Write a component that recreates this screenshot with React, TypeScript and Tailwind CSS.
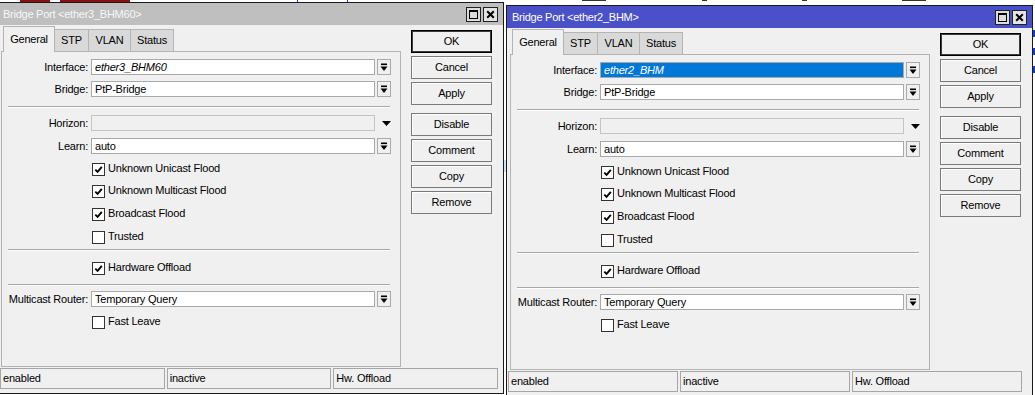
import React from "react";

function DropIcon() {
  return (
    <svg width="8" height="9" viewBox="0 0 8 9" className="block">
      <rect x="1" y="0.5" width="6" height="1.6" fill="#000" />
      <path d="M0.5 3.5 H7.5 L4 8 Z" fill="#000" />
    </svg>
  );
}

function FieldRow({
  label,
  value,
  italic,
  selected,
  disabled,
  className,
}: {
  label: string;
  value?: string;
  italic?: boolean;
  selected?: boolean;
  disabled?: boolean;
  className: string;
}) {
  const box = disabled
    ? "bg-[#f0f0f0] border-[#c4c4c4]"
    : selected
    ? "bg-[#0078d7] border-[#a9a9a9] text-white"
    : "bg-white border-[#a9a9a9] text-black";
  return (
    <div className={`flex h-[16px] items-center pr-[9px] ${className}`}>
      <div className="w-[86px] shrink-0 text-right">{label}</div>
      <div className={`ml-[3px] flex h-[16px] min-w-0 flex-1 items-center border ${box}`}>
        <span className={`pl-[3px] ${italic ? "italic" : ""}`}>{value}</span>
      </div>
      {disabled ? (
        <div className="ml-[2px] flex h-[16px] w-[14px] shrink-0 items-center justify-end">
          <svg width="9" height="5" viewBox="0 0 9 5" className="block">
            <path d="M0 0 H9 L4.5 5 Z" fill="#000" />
          </svg>
        </div>
      ) : (
        <div className="ml-[2px] flex h-[16px] w-[14px] shrink-0 items-center justify-center border border-[#a9a9a9] bg-[#f0f0f0]">
          <DropIcon />
        </div>
      )}
    </div>
  );
}

function Check({ label, checked, className }: { label: string; checked?: boolean; className: string }) {
  return (
    <div className={`flex h-[16px] items-center pl-[90px] ${className}`}>
      <div className="mt-[2px] flex h-[13px] w-[13px] shrink-0 items-center justify-center border border-[#333333] bg-white">
        {checked && (
          <svg width="9" height="9" viewBox="0 0 9 9" className="block">
            <path d="M1.3 4.6 L3.6 6.9 L7.8 1.9" stroke="#000" strokeWidth="1.9" fill="none" />
          </svg>
        )}
      </div>
      <span className="ml-[3px]">{label}</span>
    </div>
  );
}

function Sep({ className }: { className: string }) {
  return <div className={`ml-[6px] mr-[10px] h-[2px] border-t border-b border-t-[#a8a8a8] border-b-white ${className}`} />;
}

function Btn({ label, isDefault, className }: { label: string; isDefault?: boolean; className: string }) {
  return (
    <div
      className={`flex h-[23px] w-[81px] items-center justify-center bg-[#f0f0f0] ${
        isDefault
          ? "border border-black shadow-[inset_0_0_0_1px_#3c3c3c]"
          : "border border-[#7a7a7a] shadow-[inset_1px_1px_0_#ffffff]"
      } ${className}`}
    >
      {label}
    </div>
  );
}

function Window({
  pos,
  panelW,
  statusCls,
  active,
  title,
  iface,
}: {
  pos: string;
  panelW: string;
  statusCls: string;
  active?: boolean;
  title: string;
  iface: string;
}) {
  return (
    <div className={`absolute flex h-[392px] flex-col border border-[#1a1a1a] bg-[#f0f0f0] ${pos}`}>
      <div
        className={`flex h-[22px] shrink-0 items-center justify-between pl-[5px] pr-[5px] ${
          active ? "bg-[#4a50c7] text-white" : "bg-[#bfbfbf] text-[#f7f7f7]"
        }`}
      >
        <span className="text-[11px] tracking-[-0.25px]">{title}</span>
        <div className="flex gap-[2px]">
          <div className="flex h-[15px] w-[15px] items-center justify-center border border-[#222] bg-[#dcdcdc]">
            <svg width="9" height="9" viewBox="0 0 9 9" className="block">
              <rect x="0.5" y="0.5" width="8" height="8" fill="none" stroke="#000" />
              <rect x="0" y="0" width="9" height="2" fill="#000" />
            </svg>
          </div>
          <div className="flex h-[15px] w-[15px] items-center justify-center border border-[#222] bg-[#e4e4e4]">
            <svg width="9" height="9" viewBox="0 0 9 9" className="block">
              <path d="M1.2 1.2 L7.8 7.8 M7.8 1.2 L1.2 7.8" stroke="#000" strokeWidth="2" />
            </svg>
          </div>
        </div>
      </div>

      <div className="flex h-[342px] shrink-0">
        <div className={`ml-[3px] flex flex-col ${panelW}`}>
          <div className="flex h-[26px] items-end pl-[2px]">
            <div className="relative z-10 -mb-px flex h-[26px] w-[52px] items-center justify-center border border-b-0 border-[#b4b4b4] bg-[#f0f0f0] pb-[1px]">
              General
            </div>
            <div className="-ml-px flex h-[22px] w-[35px] items-center justify-center border border-b-0 border-[#b4b4b4] bg-[#d9d9d9]">
              STP
            </div>
            <div className="-ml-px flex h-[22px] w-[43px] items-center justify-center border border-b-0 border-[#b4b4b4] bg-[#d9d9d9]">
              VLAN
            </div>
            <div className="-ml-px flex h-[22px] w-[44px] items-center justify-center border border-b-0 border-[#b4b4b4] bg-[#d9d9d9]">
              Status
            </div>
          </div>
          <div className="flex h-[316px] flex-col border border-[#b4b4b4] bg-[#f0f0f0]">
            <FieldRow className="mt-[7px]" label="Interface:" value={iface} italic selected={active} />
            <FieldRow className="mt-[6px]" label="Bridge:" value="PtP-Bridge" />
            <Sep className="mt-[9px]" />
            <FieldRow className="mt-[7px]" label="Horizon:" disabled />
            <FieldRow className="mt-[7px]" label="Learn:" value="auto" />
            <Check className="mt-[6px]" label="Unknown Unicast Flood" checked />
            <Check className="mt-[6px]" label="Unknown Multicast Flood" checked />
            <Check className="mt-[7px]" label="Broadcast Flood" checked />
            <Check className="mt-[7px]" label="Trusted" />
            <Sep className="mt-[5px]" />
            <Check className="mt-[8px]" label="Hardware Offload" checked />
            <Sep className="mt-[9px]" />
            <FieldRow className="mt-[5px]" label="Multicast Router:" value="Temporary Query" />
            <Check className="mt-[6px]" label="Fast Leave" />
          </div>
        </div>
        <div className="ml-[10px] mr-[11px] flex w-[81px] shrink-0 flex-col pt-[5px]">
          <Btn label="OK" isDefault className="" />
          <Btn label="Cancel" className="mt-[3px]" />
          <Btn label="Apply" className="mt-[3px]" />
          <Btn label="Disable" className="mt-[8px]" />
          <Btn label="Comment" className="mt-[3px]" />
          <Btn label="Copy" className="mt-[3px]" />
          <Btn label="Remove" className="mt-[3px]" />
        </div>
      </div>

      <div className={`mt-[1px] flex h-[21px] shrink-0 gap-[2px] ${statusCls}`}>
        <div className="flex flex-1 items-center border border-[#a6a6a6] pl-[2px]">enabled</div>
        <div className="flex flex-1 items-center border border-[#a6a6a6] pl-[2px]">inactive</div>
        <div className="flex flex-1 items-center border border-[#a6a6a6] pl-[2px]">Hw. Offload</div>
      </div>
    </div>
  );
}

export default function App() {
  return (
    <div className="relative h-[395px] w-[1035px] overflow-hidden bg-white font-['Liberation_Sans',Arial,sans-serif] text-[11px] leading-[13px] tracking-[-0.2px] text-black">
      {/* desktop fragments behind the windows (non-text marks) */}
      <div className="absolute left-[20px] top-0 h-[2px] w-[30px] bg-[#8a1010]" />
      <div className="absolute left-[60px] top-0 h-[2px] w-[70px] bg-[#8a1010]" />
      <div className="absolute left-[297px] top-0 h-[2px] w-px bg-[#1040c0]" />
      <div className="absolute left-[347px] top-0 h-[2px] w-px bg-[#1040c0]" />
      <div className="absolute left-[582px] top-0 h-[1px] w-[24px] bg-[#333]" />
      <div className="absolute left-[702px] top-0 h-[1px] w-[5px] bg-[#333]" />
      <div className="absolute left-[802px] top-0 h-[1px] w-[5px] bg-[#333]" />
      <div className="absolute left-[902px] top-0 h-[1px] w-[24px] bg-[#333]" />
      <div className="absolute left-[1033px] top-[30px] h-[7px] w-[2px] bg-[#1040c0]" />
      <div className="absolute left-[1033px] top-[48px] h-[7px] w-[2px] bg-[#1040c0]" />
      <div className="absolute left-[1033px] top-[66px] h-[7px] w-[2px] bg-[#1040c0]" />
      <div className="absolute left-[504px] top-[160px] h-[12px] w-[2px] bg-[#cce4f7]" />

      <Window
        pos="left-[-3px] top-[2px] w-[507px]"
        panelW="w-[400px]"
        statusCls="ml-[2px] mr-[5px]"
        title="Bridge Port <ether3_BHM60>"
        iface="ether3_BHM60"
      />
      <Window
        pos="left-[506px] top-[5px] w-[527px]"
        panelW="w-[420px]"
        statusCls="ml-[1px] mr-[10px]"
        active
        title="Bridge Port <ether2_BHM>"
        iface="ether2_BHM"
      />
    </div>
  );
}
